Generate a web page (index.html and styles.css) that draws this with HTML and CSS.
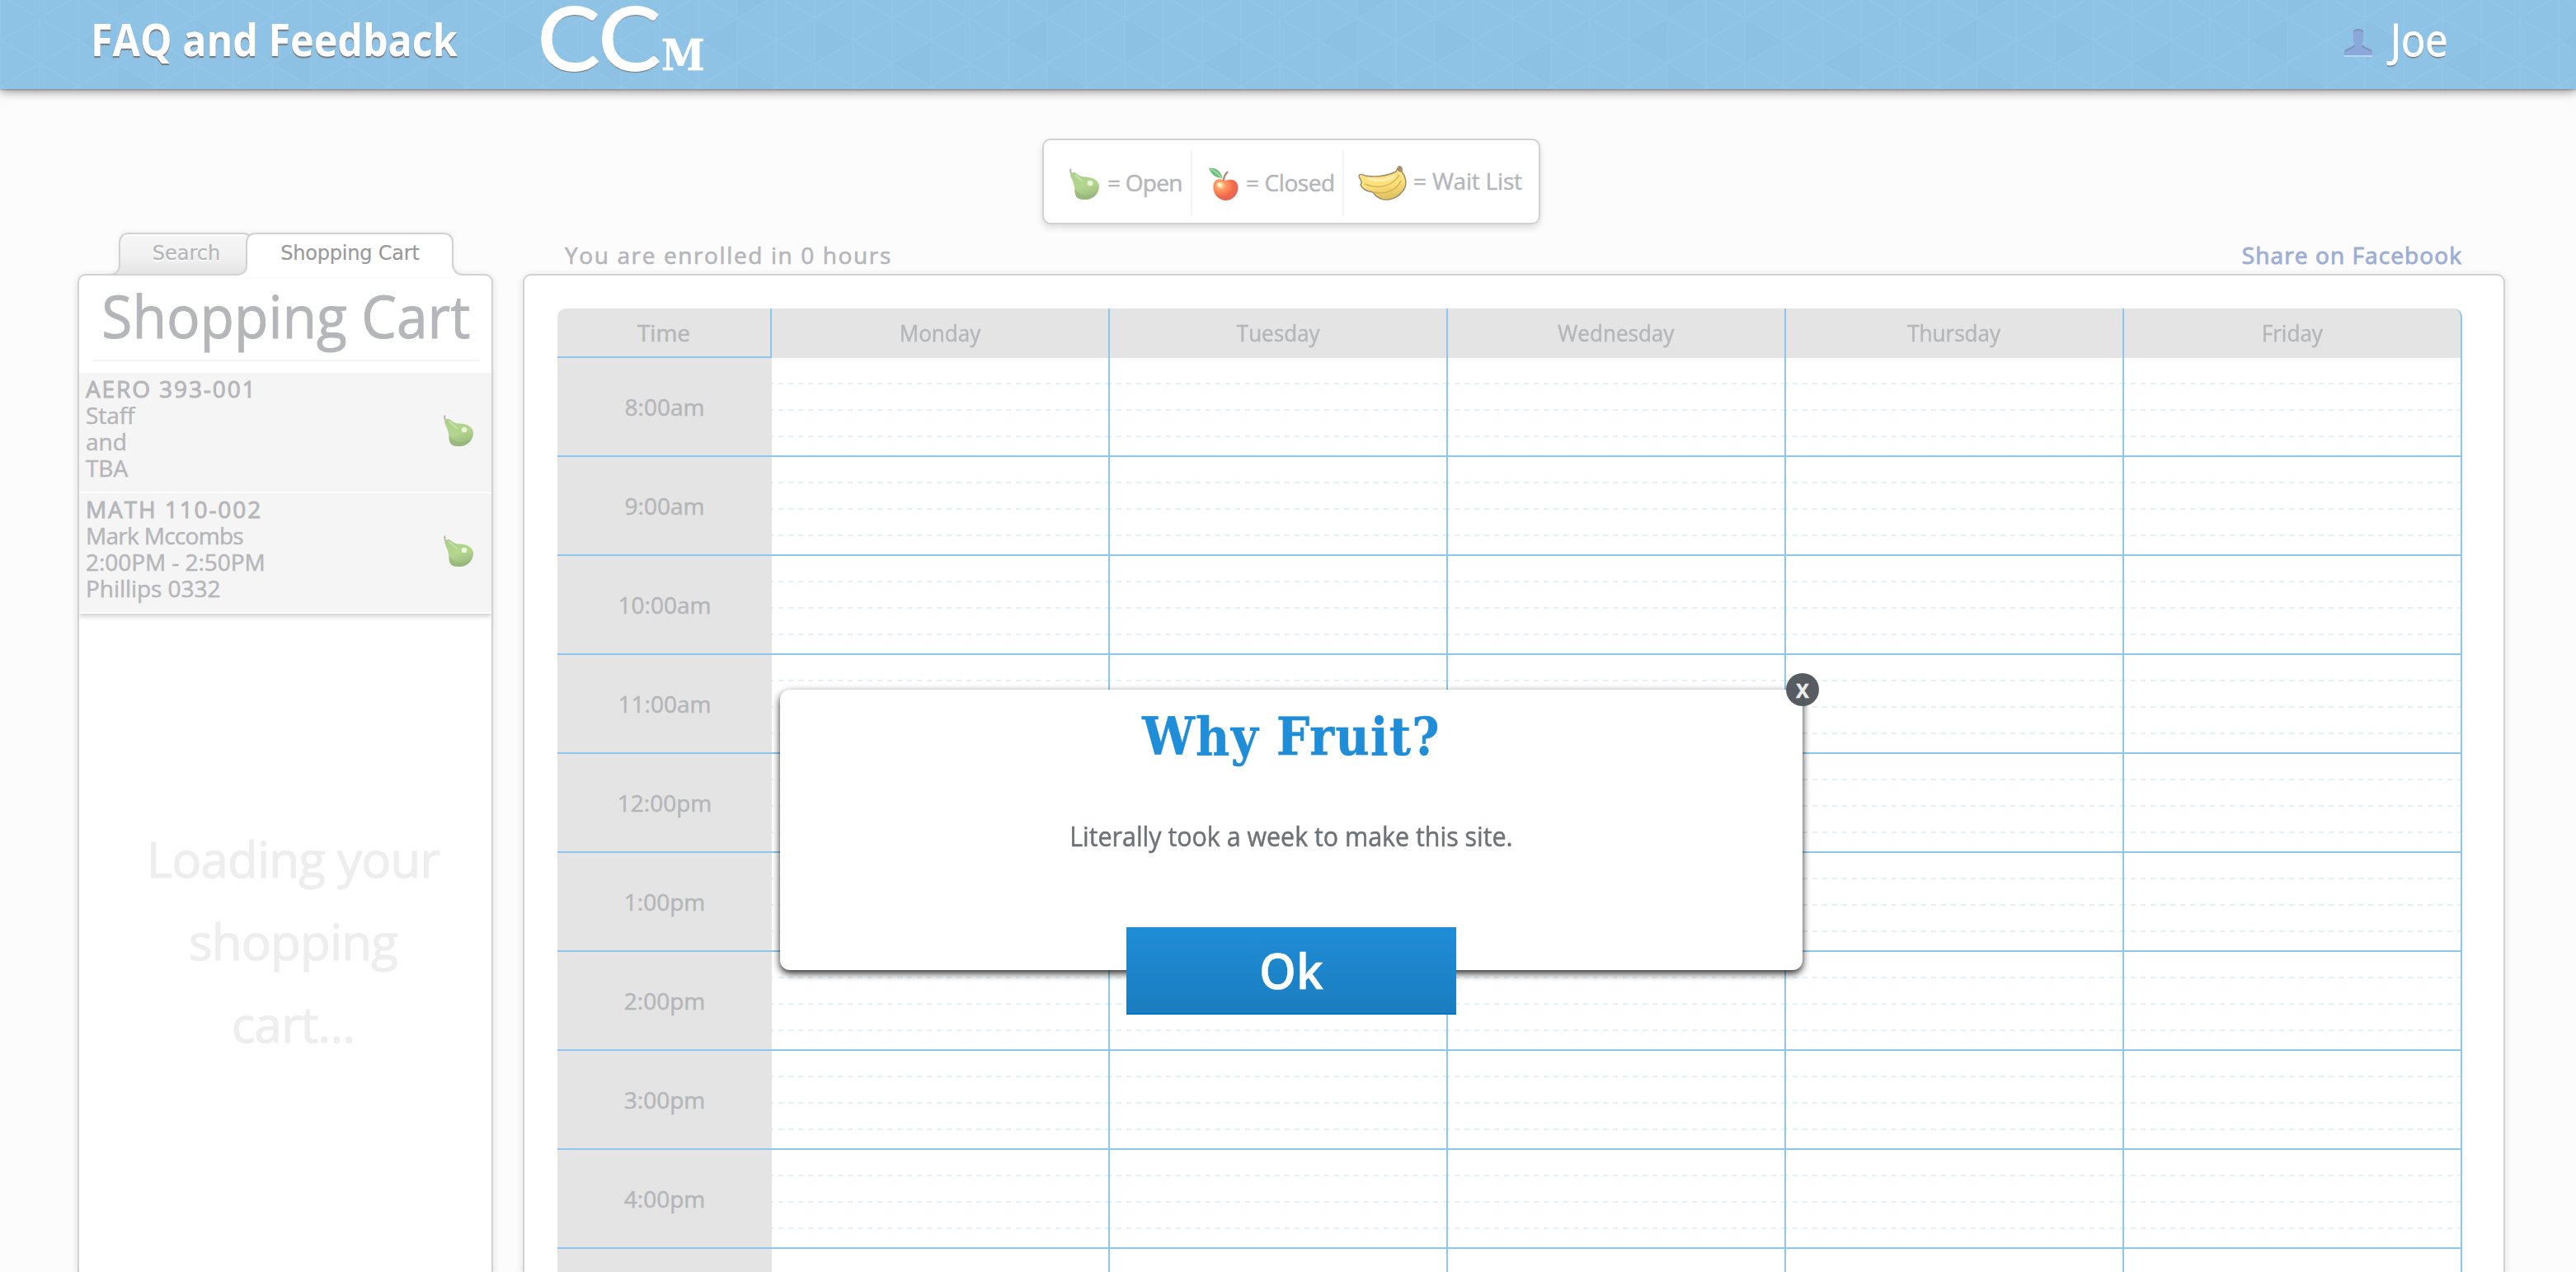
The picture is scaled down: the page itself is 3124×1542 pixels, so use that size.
FILE: index.html
```html
<!DOCTYPE html>
<html lang="en">
<head>
<meta charset="utf-8">
<title>CCM</title>
<link rel="stylesheet" href="styles.css">
</head>
<body>
<svg class="defs" width="0" height="0" aria-hidden="true">
  <defs>
    <linearGradient id="pearFill" x1="0" y1="0" x2="0.35" y2="1">
      <stop offset="0" stop-color="#a9cf8b"/><stop offset="0.6" stop-color="#b4d68e"/><stop offset="1" stop-color="#9dbd80"/>
    </linearGradient>
    <radialGradient id="appleFill" cx="0.3" cy="0.3" r="0.8">
      <stop offset="0" stop-color="#ffe9a8"/><stop offset="0.25" stop-color="#ff9a62"/><stop offset="0.65" stop-color="#f4694c"/><stop offset="1" stop-color="#d9665e"/>
    </radialGradient>
    <linearGradient id="bananaFill" x1="0" y1="0" x2="0.2" y2="1">
      <stop offset="0" stop-color="#fbe48c"/><stop offset="0.6" stop-color="#ffe07a"/><stop offset="1" stop-color="#e3c35f"/>
    </linearGradient>
    <symbol id="pear" viewBox="0 0 38 40">
      <path d="M3 1.500C1 4 2 6 4.500 9" fill="none" stroke="#bdb3ab" stroke-width="2"/>
      <path d="M2 9.500C3 6 7 5 10 7.500C13 10 16 11.500 22 11.500C31 12 37 17 37 23C36.500 33 29 39 20 39C11 39 7.500 36 7.500 29C7.500 21 4 15 2 9.500Z" fill="url(#pearFill)"/>
      <path d="M7.500 26C13 35 26 36 34.500 30C31 36 26 39 20 39C11 39 7.500 36 7.500 26Z" fill="#94b37b" opacity=".6"/>
      <path d="M8 9L17 17" stroke="#c8e0ac" stroke-width="2" stroke-linecap="round"/>
      <circle cx="26" cy="19" r="3.300" fill="#eaf4dc"/>
    </symbol>
    <symbol id="apple" viewBox="0 0 38 40">
      <path d="M6.500 21C8 13 16 13 21 16C28 13 36 15 36.500 24C36.500 34 29 40 22 40C13 40 5 32 6.500 21Z" fill="url(#appleFill)"/>
      <path d="M19 16C19 11 21 8 24 5" fill="none" stroke="#b07a68" stroke-width="2"/>
      <path d="M1 1C8 0 14 2 18 13C10 13 4 9 1 1Z" fill="#6bc07f"/>
      <path d="M3 2C8 4 13 8 17 13" fill="none" stroke="#b5d9a3" stroke-width="1.500"/>
      <circle cx="14" cy="21" r="3" fill="#fff3c6" opacity=".9"/>
    </symbol>
    <symbol id="banana" viewBox="0 0 60 42">
      <path d="M1 12C2 9 6 11 9 12C22 14 36 12 46 7L49 1C52 0 54 3 53 7C59 15 60 25 53 32C46 41 32 44 24 38C20 36 20 34 18 32C10 31 5 28 3 23C7 19 1 16 1 12Z" fill="url(#bananaFill)" stroke="#958b68" stroke-width="1.400"/>
      <path d="M8 22C24 29 42 25 50 11M20 32C33 35 47 30 52 18" fill="none" stroke="#cdb25a" stroke-width="1.500"/>
      <path d="M12 15C25 20 38 17 45 12" fill="none" stroke="#fff2b6" stroke-width="3" opacity=".8"/>
      <path d="M48 3L50 0L53 3L52 8L48 6Z" fill="#a98b6e"/>
    </symbol>
  </defs>
</svg>

<header class="topbar">
  <svg class="topbar-pattern" width="100%" height="108" aria-hidden="true">
    <defs>
      <pattern id="tri" x="48" y="22" width="94" height="55" patternUnits="userSpaceOnUse">
        <path d="M0 0L47 27.500L94 0M0 55L47 27.500L94 55M0 0V55M47 0V55M94 0V55" fill="none" stroke="#fff" stroke-opacity=".03" stroke-width="2"/>
      </pattern>
      <pattern id="shade" x="48" y="22" width="376" height="110" patternUnits="userSpaceOnUse">
        <path d="M47 27.500L94 0V55ZM235 27.500L188 0V55ZM282 55L329 27.500V82.500ZM141 82.500L94 55V110Z" fill="#5d97be" fill-opacity=".05"/>
      </pattern>
    </defs>
    <rect width="100%" height="108" fill="url(#tri)"/>
    <rect width="100%" height="108" fill="url(#shade)"/>
  </svg>
  <a class="topbar-link"><span>FAQ and Feedback</span></a>
  <div class="logo"><span class="logo-cc">CC</span><span class="logo-m">M</span></div>
  <div class="user">
    <svg class="user-icon" viewBox="0 0 34 34" width="34" height="34">
      <path d="M0 34V29C2 25 10 25 12 21C13 18 10.500 17 10.500 13V6C10.500 1.500 13 0 17 0S23.500 1.500 23.500 6V13C23.500 17 21 18 22 21C24 25 32 25 34 29V34Z" fill="#b9d8ee"/>
      <path d="M0 32V27C2 23 10 24 12 20C13 17 10.500 16 10.500 12V5C10.500 1.500 13 0 17 0S23.500 1.500 23.500 5V12C23.500 16 21 17 22 20C24 24 32 23 34 27V32Z" fill="#8aa8d9"/>
      <path d="M1 27C4 23.500 10.500 24 12.500 20M33 27C30 23.500 23.500 24 21.500 20M11.500 4C12.500 1.500 14 1 17 1S21.500 1.500 22.500 4" fill="none" stroke="#7e93b8" stroke-width="2"/>
    </svg>
    <span class="user-name">Joe</span>
  </div>
</header>

<section class="legend">
  <div class="legend-item open"><svg width="38" height="40"><use href="#pear"/></svg><span>= Open</span></div>
  <div class="legend-item closed"><svg width="38" height="40"><use href="#apple"/></svg><span>= Closed</span></div>
  <div class="legend-item wait"><svg width="60" height="42"><use href="#banana"/></svg><span>= Wait List</span></div>
</section>

<main class="content">
  <aside class="sidebar">
    <nav class="tabs">
      <svg class="tabs-shape" width="504" height="54" aria-hidden="true">
        <defs><linearGradient id="tabFill" x1="0" y1="0" x2="0" y2="1"><stop offset="0" stop-color="#f6f6f6"/><stop offset=".5" stop-color="#f2f2f2"/><stop offset="1" stop-color="#e4e4e4"/></linearGradient></defs>
        <path d="M41 51Q50 50 51 40V13Q51 1 63 1H200Q212 1 212 13V51Z" fill="url(#tabFill)" stroke="#d1d1d1" stroke-width="2"/>
        <path d="M56 5Q58 3 63 3H202" fill="none" stroke="#fff" stroke-width="2"/>
        <path d="M195 51Q205 49 205 41V13Q205 1 217 1H443Q455 1 455 13V40Q457 50 466 51V54H195Z" fill="#fff"/>
        <path d="M195 51Q205 49 205 41V13Q205 1 217 1H443Q455 1 455 13V40Q457 50 466 51" fill="none" stroke="#d1d1d1" stroke-width="2"/>
      </svg>
      <a class="tab tab-search">Search</a>
      <a class="tab tab-cart">Shopping Cart</a>
    </nav>
    <div class="panel cart">
      <h1 class="cart-title"><span>Shopping Cart</span></h1>
      <div class="cart-rule"></div>
      <ul class="courses">
        <li class="course">
          <div><h2>AERO 393-001</h2><p>Staff</p><p>and</p><p>TBA</p></div>
          <svg width="38" height="40"><use href="#pear"/></svg>
        </li>
        <li class="course">
          <div><h2>MATH 110-002</h2><p class="tight">Mark Mccombs</p><p>2:00PM - 2:50PM</p><p>Phillips 0332</p></div>
          <svg width="38" height="40"><use href="#pear"/></svg>
        </li>
      </ul>
      <p class="loading">Loading your<br>shopping<br>cart...</p>
    </div>
  </aside>

  <section class="schedule">
    <div class="schedule-bar"><span>You are enrolled in 0 hours</span><a class="share">Share on Facebook</a></div>
    <div class="panel calendar">
      <div class="grid">
        <div class="head time-head">Time</div><div class="head"><span>Monday</span></div><div class="head"><span>Tuesday</span></div><div class="head"><span>Wednesday</span></div><div class="head"><span>Thursday</span></div><div class="head last"><span>Friday</span></div>
        <div class="time">8:00am</div><div class="slot"></div><div class="slot"></div><div class="slot"></div><div class="slot"></div><div class="slot"></div>
        <div class="time">9:00am</div><div class="slot"></div><div class="slot"></div><div class="slot"></div><div class="slot"></div><div class="slot"></div>
        <div class="time">10:00am</div><div class="slot"></div><div class="slot"></div><div class="slot"></div><div class="slot"></div><div class="slot"></div>
        <div class="time">11:00am</div><div class="slot"></div><div class="slot"></div><div class="slot"></div><div class="slot"></div><div class="slot"></div>
        <div class="time">12:00pm</div><div class="slot"></div><div class="slot"></div><div class="slot"></div><div class="slot"></div><div class="slot"></div>
        <div class="time">1:00pm</div><div class="slot"></div><div class="slot"></div><div class="slot"></div><div class="slot"></div><div class="slot"></div>
        <div class="time">2:00pm</div><div class="slot"></div><div class="slot"></div><div class="slot"></div><div class="slot"></div><div class="slot"></div>
        <div class="time">3:00pm</div><div class="slot"></div><div class="slot"></div><div class="slot"></div><div class="slot"></div><div class="slot"></div>
        <div class="time">4:00pm</div><div class="slot"></div><div class="slot"></div><div class="slot"></div><div class="slot"></div><div class="slot"></div>
        <div class="time cut"></div><div class="slot cut"></div><div class="slot cut"></div><div class="slot cut"></div><div class="slot cut"></div><div class="slot cut"></div>
      </div>
    </div>
  </section>
</main>

<div class="modal" role="dialog">
  <h2 class="modal-title">Why Fruit?</h2>
  <p class="modal-text"><span>Literally took a week to make this site.</span></p>
  <button class="modal-ok"><span>Ok</span></button>
  <a class="modal-close">X</a>
</div>
</body>
</html>
```
FILE: styles.css
```css
* { box-sizing: border-box; margin: 0; padding: 0; }
html, body { width: 3124px; height: 1542px; overflow: hidden; }
body {
  position: relative;
  background: #fcfcfc;
  color: #b5b6ba;
  font: 28px "Open Sans", "Noto Sans", sans-serif;
  -webkit-text-stroke: .5px;
}
ul { list-style: none; }
.defs { position: absolute; }

/* Top bar */
.topbar {
  position: relative;
  display: flex;
  height: 108px;
  padding-left: 110px;
  background: #8ec3e6;
  box-shadow: 0 2px 12px rgba(0, 0, 0, .5), 0 1px 2px rgba(0, 0, 0, .25);
  color: #fff;
}
.topbar-pattern { position: absolute; left: 0; top: 0; }
.topbar > :not(.topbar-pattern) { z-index: 1; }
.topbar-link, .user-name {
  font-size: 54px;
  line-height: 94px;
  text-shadow: 0 2px 1px #777;
}
.topbar-link { width: 542px; font-weight: 700; -webkit-text-stroke: 0; }
.topbar-link span, .user-name { display: inline-block; transform: scaleX(.897); transform-origin: left; white-space: nowrap; }
.logo { display: flex; width: 210px; }
.logo-cc {
  width: 150px;
  font: 107px/87px Lato, sans-serif;
  transform: scaleX(1.055);
  transform-origin: left;
  -webkit-text-stroke: 2px #fff;
  text-shadow: 0 2px 1px #777;
}
.logo-m { font: bold 53px/133px "DejaVu Serif Condensed", "DejaVu Serif", serif; }
.user { display: flex; margin-left: auto; padding-right: 150px; }
.user-icon { margin: 35px 22px 0 0; }
.user-name { transform: scaleX(.9); width: 75px; -webkit-text-stroke: 1px; }

/* Legend */
.panel, .legend {
  background: #fff;
  border: 2px solid #d1d1d1;
  border-radius: 10px;
}
.legend {
  display: flex;
  width: 604px;
  height: 104px;
  margin: 60px 0 10px 1264px;
  padding-top: 12px;
  box-shadow: 0 4px 8px rgba(0, 0, 0, .13);
}
.legend-item { display: flex; height: 80px; line-height: 78px; border-right: 2px solid #f4f4f4; white-space: nowrap; }
.legend-item svg { flex: none; margin-top: 21px; }
.open { width: 180px; padding-left: 30px; letter-spacing: -.75px; }
.open svg { margin-right: 9px; }
.closed { width: 184px; padding-left: 19px; letter-spacing: -.4px; }
.closed svg { margin-right: 8px; }
.wait { padding-left: 17px; letter-spacing: -.2px; line-height: 74px; border: 0; }
.wait svg { margin: 19px 7px 0 0; }

/* Columns */
.content { display: flex; gap: 36px; padding-left: 94px; }
.sidebar { width: 504px; }
.schedule { width: 2404px; }
.panel {
  height: 1210px;
  border-bottom: 0;
  border-radius: 10px 10px 0 0;
  box-shadow: 0 2px 10px rgba(0, 0, 0, .12);
}

/* Tabs */
.tabs {
  position: relative;
  z-index: 1;
  display: flex;
  height: 50px;
  padding-left: 50px;
  font: 24px/51px "DejaVu Sans", sans-serif;
  text-align: center;
  -webkit-text-stroke: .2px;
}
.tabs-shape { position: absolute; left: 0; top: 0; filter: drop-shadow(0 -1px 3px rgba(0, 0, 0, .05)); }
.tab { position: relative; }
.tab-search { width: 164px; text-shadow: 0 2px 0 #fff; }
.tab-cart { width: 233px; color: #999; letter-spacing: -.2px; }

/* Cart */
.cart-title { font-size: 72px; font-weight: 400; line-height: 96px; text-align: center; -webkit-text-stroke: 1px; }
.cart-title span { display: inline-block; transform: translateX(1px) scaleX(.94); }
.cart-rule { height: 2px; margin: 6px 14px 14px 16px; background: #f4f4f4; }
.courses { box-shadow: 0 3px 6px rgba(0, 0, 0, .2); clip-path: inset(0 0 -12px 0); }
.course {
  display: flex;
  justify-content: space-between;
  height: 146px;
  padding: 3px 21px 0 8px;
  border-bottom: 2px solid #fff;
  background: #f5f5f5;
  line-height: 32px;
}
.course h2 { font-size: 28px; font-weight: 400; letter-spacing: 1.9px; -webkit-text-stroke: .9px; }
.course svg { margin-top: 47px; }
.course p { letter-spacing: -.05px; }
.course .tight { letter-spacing: -.7px; }
.loading {
  margin-top: 247px;
  padding-left: 19px;
  color: #eee;
  font-size: 60px;
  line-height: 100px;
  letter-spacing: -.8px;
  text-align: center;
  -webkit-text-stroke: 1.2px;
}

/* Schedule */
.schedule-bar {
  display: flex;
  justify-content: space-between;
  height: 50px;
  padding: 0 52px 0 51px;
  line-height: 55px;
  letter-spacing: 1.62px;
  -webkit-text-stroke: .6px;
}
.share { color: #9daed4; letter-spacing: 1.1px; -webkit-text-stroke: .9px; }
.calendar { padding: 40px 0 0 40px; }
.grid {
  display: grid;
  grid-template-columns: 260px repeat(5, 410px);
  grid-template-rows: 60px repeat(9, 120px) 28px;
  width: 2310px;
  text-align: center;
}
.head { background: #e4e4e4; border-right: 2px solid #8ec6ec; line-height: 58px; }
.head span { display: inline-block; transform: scaleX(.93); }
.time-head { border-bottom: 2px solid #8ec6ec; border-top-left-radius: 10px; }
.last { border-top-right-radius: 10px; }
.time { background: #e4e4e4; border-bottom: 2px solid #8ec6ec; line-height: 118px; }
.slot {
  --dash: repeating-linear-gradient(to right, #e5f0f5 0 2px, transparent 2px 8px, #e5f0f5 8px 12px);
  border: solid #8ec6ec;
  border-width: 0 2px 2px 0;
  background: var(--dash) 0 30px / 100% 2px no-repeat, var(--dash) 0 62px / 100% 2px no-repeat, var(--dash) 0 94px / 100% 2px no-repeat;
}
.cut { border-bottom: 0; }

/* Dialog */
.modal {
  position: absolute;
  left: 946px;
  top: 836px;
  width: 1240px;
  height: 340px;
  border-radius: 12px;
  background: #fff;
  box-shadow: 0 4px 10px rgba(0, 0, 0, .85);
  text-align: center;
}
.modal-title {
  color: #1f8dd7;
  font: bold 63px/115px "DejaVu Serif Condensed", "DejaVu Serif", serif;
  letter-spacing: 1.3px;
}
.modal-text { margin-top: 43px; color: #6c7278; font-size: 32px; line-height: 40px; }
.modal-text span { display: inline-block; transform: scaleX(.95); }
.modal-ok {
  position: absolute;
  left: 420px;
  top: 288px;
  width: 400px;
  height: 106px;
  border: 0;
  border-bottom: 2px solid #0079c2;
  background: linear-gradient(#1f8dd7, #1b7dbf);
  color: #fff;
  font: 600 60px/104px "Open Sans", sans-serif;
}
.modal-ok span { display: inline-block; transform: scaleX(.95); }
.modal-close {
  position: absolute;
  left: 1220px;
  top: -20px;
  width: 40px;
  height: 40px;
  border-radius: 50%;
  background: rgba(76, 82, 89, .94);
  color: #eee;
  font: 700 23px/42px "Open Sans", sans-serif;
}
```
